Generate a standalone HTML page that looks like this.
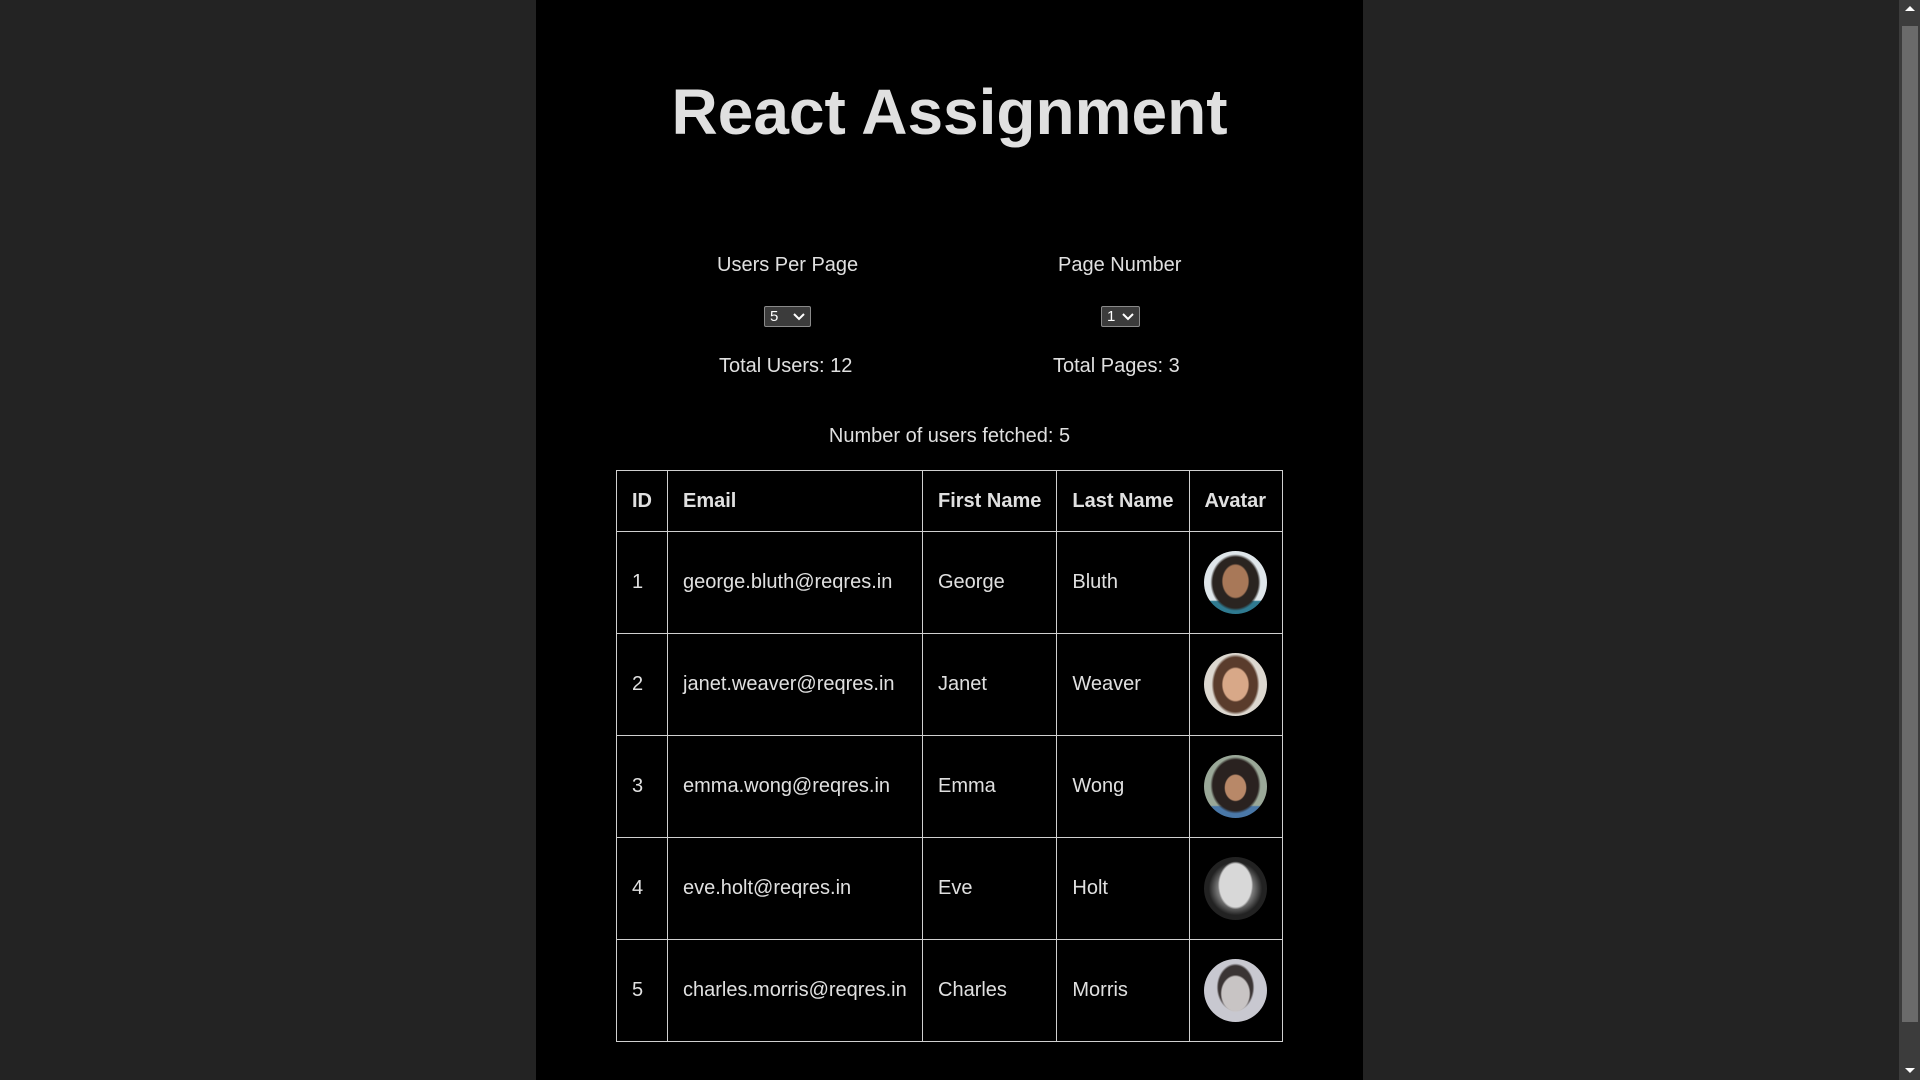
<!DOCTYPE html>
<html><head><meta charset="utf-8"><style>
*{margin:0;padding:0;box-sizing:border-box}
html,body{width:1920px;height:1080px;overflow:hidden;background:#232323;font-family:"Liberation Sans",Arial,sans-serif;color:#e0e0e0}
.c{position:absolute;left:536px;top:0;width:827px;height:1080px;background:#000}
.t{position:absolute;white-space:nowrap;line-height:24px;font-size:20px}
h1{position:absolute;left:0;width:1899px;top:75px;text-align:center;font-size:64px;line-height:74px;font-weight:bold;color:#e0e0e0}
.sel{position:absolute;top:306px;height:21px;border:1px solid #8a8a8a;background:#3b3b3b;border-radius:2px;font-size:15px;line-height:19px;padding-left:5px;color:#fff}
.sel svg{position:absolute;right:5px;top:6px}
table{position:absolute;left:616px;top:470px;border-collapse:collapse;font-size:20px}
td,th{border:1px solid #d0d0d0;padding:0 15px;text-align:left;vertical-align:middle;white-space:nowrap}
th{height:61px}
td{height:102px}
.av{width:63px;height:63px;border-radius:50%;display:block;margin-left:-1px}
.sb{position:absolute;left:1899px;top:0;width:21px;height:1080px;background:#3c3c3c}
.th{position:absolute;left:1902px;top:26px;width:16px;height:996px;background:#6b6b6b}
</style></head><body>
<div class="c"></div>
<h1>React Assignment</h1>
<div class="t" style="left:717px;top:253px">Users Per Page</div>
<div class="t" style="left:1058px;top:253px">Page Number</div>
<div class="sel" style="left:764px;width:47px">5<svg width="12" height="8"><path d="M1 1l5 5 5-5" stroke="#fff" stroke-width="2" fill="none"/></svg></div>
<div class="sel" style="left:1101px;width:39px">1<svg width="12" height="8"><path d="M1 1l5 5 5-5" stroke="#fff" stroke-width="2" fill="none"/></svg></div>
<div class="t" style="left:719px;top:354px">Total Users: 12</div>
<div class="t" style="left:1053px;top:354px">Total Pages: 3</div>
<div class="t" style="left:0;width:1899px;text-align:center;top:424px">Number of users fetched: 5</div>
<table>
<tr><th style="width:51px">ID</th><th style="width:255px">Email</th><th style="width:134px">First Name</th><th style="width:132px">Last Name</th><th style="width:93px">Avatar</th></tr>
<tr><td>1</td><td>george.bluth@reqres.in</td><td>George</td><td>Bluth</td><td><span class="av" style="background:radial-gradient(ellipse 22% 28% at 50% 48%,#a87858 90%,transparent 100%),radial-gradient(ellipse 40% 45% at 50% 50%,#2a2420 90%,transparent 100%),linear-gradient(#dfe6ea 78%,#2f7a90 80%)"></span></td></tr>
<tr><td>2</td><td>janet.weaver@reqres.in</td><td>Janet</td><td>Weaver</td><td><span class="av" style="background:radial-gradient(ellipse 22% 28% at 50% 50%,#d8a888 90%,transparent 100%),radial-gradient(ellipse 38% 48% at 50% 50%,#5a3c2c 90%,transparent 100%),#ddd8d0"></span></td></tr>
<tr><td>3</td><td>emma.wong@reqres.in</td><td>Emma</td><td>Wong</td><td><span class="av" style="background:radial-gradient(ellipse 18% 22% at 50% 52%,#b88868 90%,transparent 100%),radial-gradient(ellipse 40% 45% at 50% 48%,#2a2220 90%,transparent 100%),linear-gradient(#9aa898 80%,#4a78a8 82%)"></span></td></tr>
<tr><td>4</td><td>eve.holt@reqres.in</td><td>Eve</td><td>Holt</td><td><span class="av" style="background:radial-gradient(ellipse 28% 38% at 50% 45%,#d8d8d8 90%,transparent 100%),radial-gradient(circle at 50% 50%,#777 0 40%,#222 60%)"></span></td></tr>
<tr><td>5</td><td>charles.morris@reqres.in</td><td>Charles</td><td>Morris</td><td><span class="av" style="background:radial-gradient(ellipse 24% 30% at 50% 55%,#c8c4c4 90%,transparent 100%),radial-gradient(ellipse 30% 38% at 50% 45%,#3a3434 90%,transparent 100%),#c8c8d0"></span></td></tr>
</table>
<div class="sb"></div><div class="th"></div>
<svg style="position:absolute;left:1904px;top:4px" width="12" height="8"><path d="M1 7l5-5 5 5z" fill="#fff"/></svg>
<svg style="position:absolute;left:1904px;top:1067px" width="12" height="8"><path d="M1 1l5 5 5-5z" fill="#fff"/></svg>
</body></html>
